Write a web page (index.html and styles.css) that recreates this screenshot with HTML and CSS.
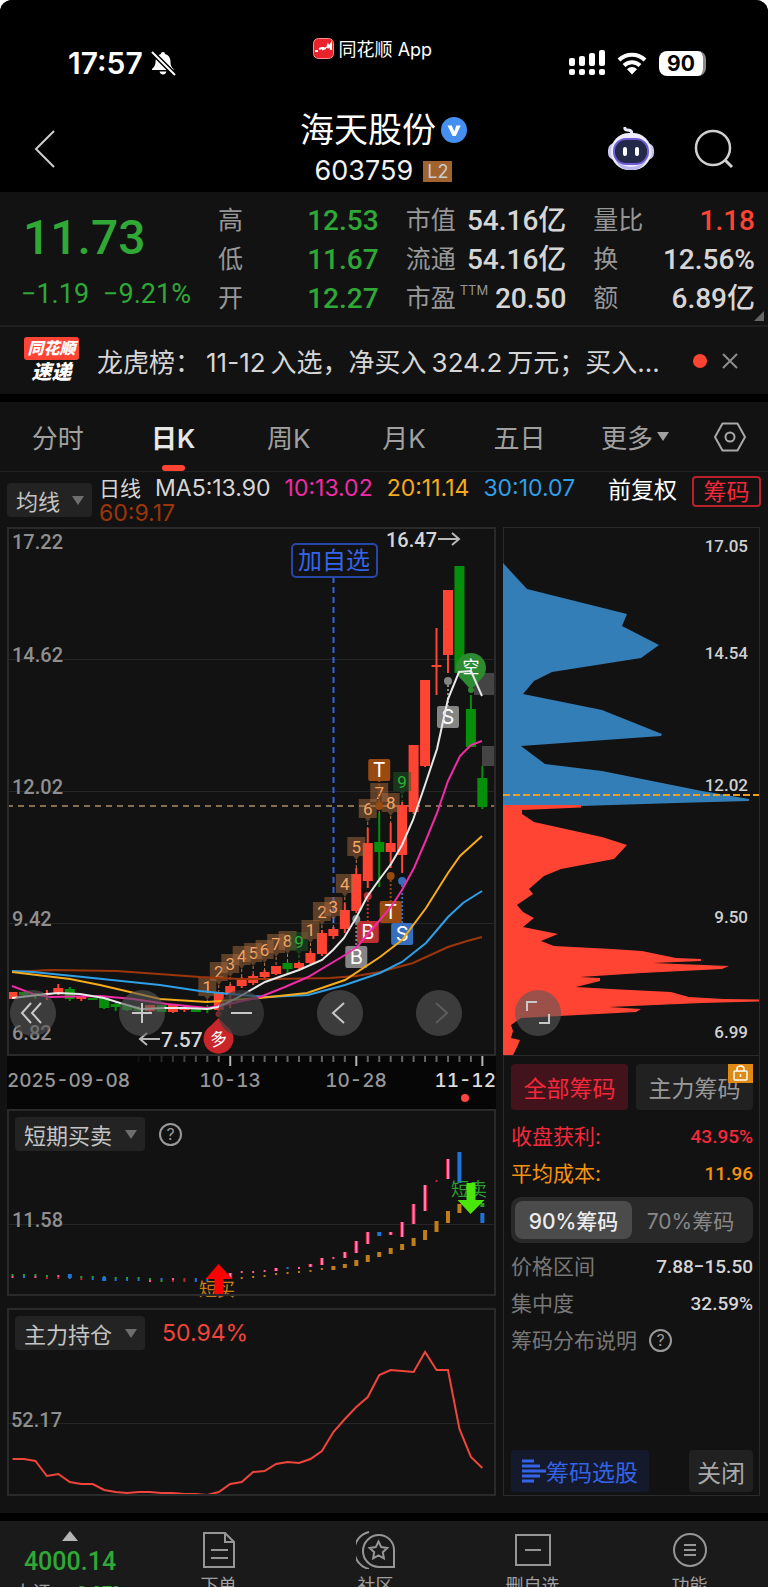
FILE: index.html
```html
<!DOCTYPE html>
<html lang="zh-CN">

<head>
    <meta charset="UTF-8">
    <meta name="viewport" content="width=device-width, initial-scale=1.0">
    <title>海天股份 603759</title>
    <link rel="stylesheet" href="styles.css">
</head>

<body>
    <div class="app">
        <header class="top">
            <div class="status">
                <div class="clock">
                    <span>17:57</span>
                    <svg width="26" height="26" viewBox="0 0 26 26">
                        <path d="M13 2c1.300 0 2 .8 2 2 3.600 1 5.500 3.800 5.500 7.500 0 4 .8 5.500 3 7.500v1H2v-1c2.200-2 3.500-3.500 3.500-7.500C5.500 7.800 7.400 5 11 4c0-1.200.7-2 2-2zM9.500 21.500h7c-.5 2-1.800 3-3.500 3s-3-1-3.500-3z" fill="#fff" />
                        <path d="M2 2l22 22" stroke="#000" stroke-width="5" />
                        <path d="M2 2l23 23" stroke="#fff" stroke-width="2" />
                    </svg>
                </div>
                <div class="from-app">
                    <svg width="21" height="21" viewBox="0 0 21 21">
                        <rect x=".5" y=".5" width="20" height="20" rx="5" fill="#e8232b" stroke="#ff8d8d" />
                        <path d="M2 13h3M6 11l3-1M10 9v2l3-1M14 10l1-3 1 2 2-3v6" fill="none" stroke="#fff" stroke-width="2" />
                    </svg>
                    <span>同花顺 App</span>
                </div>
                <div class="signals">
                    <svg width="36" height="26" viewBox="0 0 36 26" fill="#fff">
                        <rect x="0" y="8" width="6" height="8" rx="2" />
                        <rect x="10" y="6" width="6" height="10" rx="2" />
                        <rect x="20" y="3" width="6" height="13" rx="2" />
                        <rect x="30" y="0" width="6" height="16" rx="2" />
                        <rect x="0" y="19" width="6" height="6" rx="2" />
                        <rect x="10" y="19" width="6" height="6" rx="2" />
                        <rect x="20" y="19" width="6" height="6" rx="2" />
                        <rect x="30" y="19" width="6" height="6" rx="2" />
                    </svg>
                    <svg width="30" height="24" viewBox="0 0 30 24">
                        <g fill="none" stroke="#fff" stroke-width="4">
                            <path d="M2 9a18.500 18.500 0 0 1 26 0" />
                            <path d="M7 14.500a11.500 11.500 0 0 1 16 0" />
                        </g>
                        <path d="M15 23.500l-5-5.300a7 7 0 0 1 10 0z" fill="#fff" />
                    </svg>
                    <span class="battery">90</span>
                </div>
            </div>
            <div class="title-bar">
                <button class="icon-btn back" aria-label="返回">
                    <svg width="24" height="40" viewBox="0 0 24 40" fill="none" stroke="#d0d0d0" stroke-width="2">
                        <path d="M21 2L3 20l18 18" />
                    </svg>
                </button>
                <div class="title">
                    <h1>海天股份
                        <svg width="26" height="26" viewBox="0 0 26 26">
                            <circle cx="13" cy="13" r="13" fill="#448ff0" />
                            <path d="M6.500 8.500h4.300l2.400 6 2.200-6h4.300l-4.900 10.500h-3.200z" fill="#fff" />
                        </svg>
                    </h1>
                    <p><span>603759</span><span class="level">L2</span></p>
                </div>
                <div class="title-actions">
                    <button class="icon-btn" aria-label="助手">
                        <svg width="46" height="44" viewBox="0 0 46 44">
                            <path d="M23 8c2-4-1-5-4-5-2 0-3-2-1-3" fill="none" stroke="#e9e9fb" stroke-width="3" />
                            <rect x="0" y="16" width="46" height="17" rx="7" fill="#c9c8f2" />
                            <rect x="3" y="6" width="40" height="37" rx="18" fill="#ececfb" />
                            <path d="M8 33c6 9 24 9 30 0-3 8-9 10-15 10S11 41 8 33z" fill="#b9b6ee" />
                            <rect x="6" y="12" width="34" height="25" rx="12" fill="#232949" stroke="#6f5bd8" stroke-width="2" />
                            <rect x="15" y="20" width="4" height="9" rx="2" fill="#fff" />
                            <rect x="27" y="20" width="4" height="9" rx="2" fill="#fff" />
                        </svg>
                    </button>
                    <button class="icon-btn" aria-label="搜索">
                        <svg width="40" height="40" viewBox="0 0 40 40" fill="none" stroke="#d0d0d0" stroke-width="2.500">
                            <circle cx="19" cy="19" r="17" />
                            <path d="M31 31l7 7" stroke-width="3" />
                        </svg>
                    </button>
                </div>
            </div>
        </header>

        <section class="quote">
            <div class="last">
                <strong>11.73</strong>
                <div class="change"><span>−1.19</span><span>−9.21%</span></div>
            </div>
            <div class="stats">
                <div><span>高</span><b class="down">12.53</b></div>
                <div><span>低</span><b class="down">11.67</b></div>
                <div><span>开</span><b class="down">12.27</b></div>
            </div>
            <div class="stats">
                <div><span>市值</span><b>54.16亿</b></div>
                <div><span>流通</span><b>54.16亿</b></div>
                <div><span>市盈<sup>TTM</sup></span><b>20.50</b></div>
            </div>
            <div class="stats">
                <div><span>量比</span><b class="up">1.18</b></div>
                <div><span>换</span><b>12.56%</b></div>
                <div><span>额</span><b>6.89亿</b></div>
            </div>
            <i class="corner"></i>
        </section>

        <section class="news">
            <div class="news-logo"><span>同花顺</span><em>速递</em></div>
            <a href="#" class="news-text">龙虎榜：<span>11-12</span>入选，净买入<span>324.2</span>万元；买入...</a>
            <i class="dot"></i>
            <button class="icon-btn" aria-label="关闭">
                <svg width="16" height="16" viewBox="0 0 16 16" stroke="#8c8c8c" stroke-width="2">
                    <path d="M1 1l14 14M15 1L1 15" />
                </svg>
            </button>
        </section>

        <nav class="tabs">
            <button>分时</button>
            <button class="active">日K</button>
            <button>周K</button>
            <button>月K</button>
            <button>五日</button>
            <button>更多<i class="caret small"></i></button>
            <button class="setting" aria-label="设置">
                <svg width="34" height="30" viewBox="0 0 34 30" fill="none" stroke="#a8a8a8" stroke-width="2">
                    <path d="M9.500 1.500h15L32 15l-7.500 13.500h-15L2 15z" stroke-linejoin="round" />
                    <circle cx="17" cy="15" r="4.500" />
                </svg>
            </button>
        </nav>

        <div class="ma-row">
            <button class="picker">均线<i class="caret"></i></button>
            <div class="ma-list">
                <span class="period">日线</span>
                <span>MA5:13.90</span>
                <span class="ma10">10:13.02</span>
                <span class="ma20">20:11.14</span>
                <span class="ma30">30:10.07</span>
                <span class="ma60">60:9.17</span>
            </div>
            <button class="adjust">前复权</button>
            <button class="chip-btn">筹码</button>
        </div>

        <main class="board">
            <div class="left">
                <div class="kline">
                    <svg id="kline" viewBox="7 527 489 529">
                        <path d="M7 659.500h489M7 791.500h489M7 923.500h489" stroke="#262626" />
                        <g class="axis">
                            <text x="12" y="549">17.22</text>
                            <text x="12" y="662">14.62</text>
                            <text x="12" y="794">12.02</text>
                            <text x="12" y="926">9.42</text>
                            <text x="12" y="1040">6.82</text>
                        </g>
                        <path d="M474 673h22v22h-22zM482 746h14v20h-14z" fill="#444" />
                        <path d="M333.500 577V931" stroke="#3563e0" stroke-width="2" stroke-dasharray="6 4" />
                        <path d="M7 806h489" stroke="#866f50" stroke-width="2" stroke-dasharray="6 5" />
                        <g id="candles"></g>
                        <g id="marks"></g>
                        <g id="averages"></g>
                        <g class="extreme">
                            <text x="386" y="547">16.47</text>
                            <text x="161" y="1047" class="big">7.57</text>
                            <path d="M438 539h20M452 533l7 6-7 6M160 1039h-19M147 1033l-7 6 7 6" />
                        </g>
                    </svg>
                    <button class="add-btn">加自选</button>
                </div>
                <div class="dates">
                    <svg id="ticks" viewBox="7 1056 489 12"></svg>
                    <div class="date-labels">
                        <span>2025-09-08</span>
                        <span>10-13</span>
                        <span>10-28</span>
                        <span class="today">11-12</span>
                    </div>
                </div>
                <div class="panel">
                    <div class="panel-head">
                        <button class="picker">短期买卖<i class="caret"></i></button>
                        <button class="help" aria-label="说明">?</button>
                    </div>
                    <svg viewBox="7 1109 489 187">
                        <path d="M7 1224.500h489" stroke="#262626" />
                        <g class="axis"><text x="12" y="1227">11.58</text></g>
                        <g id="trend"></g>
                        <text x="199" y="1296" class="buy">短买</text>
                        <text x="451" y="1196" class="sell">短卖</text>
                        <path d="M218.500 1264l14 15h-9v16h-9v-16h-9z" fill="#f00" />
                        <path d="M470.500 1214l14-14h-9v-17h-9v17h-9z" fill="#4be60c" />
                    </svg>
                </div>
                <div class="panel">
                    <div class="panel-head">
                        <button class="picker">主力持仓<i class="caret"></i></button>
                        <span class="ratio">50.94%</span>
                    </div>
                    <svg viewBox="7 1308 489 188">
                        <path d="M7 1423.500h489" stroke="#262626" />
                        <g class="axis"><text x="11" y="1427">52.17</text></g>
                        <g id="holding"></g>
                    </svg>
                </div>
            </div>

            <aside class="right">
                <svg class="chips" viewBox="505 528 255 527">
                    <path fill="#347eb8" d="M504 563L528 589 628 614 623 626 660 645 642 658 553 672 535 681 524 694 603 710 663 734 662 736 522 746 546 764 603 771 703 791 750 799 750 801 677 803 582 806H504z" />
                    <path fill="#ff4433" d="M504 805H582V807.500L523 810V814L535 822 603 837 628 845 615 859 562 869 545 876 530 889 534 894 518 905 524 912 535 918 524 927 559 934 542 941 555 946 613 949 643 951 677 958 702 959V961L654 963 730 966 723 969 643 973 581 977 601 978V981L577 987 612 989 672 992 690 997 725 999 760 999.500V1001.500L703 1003 610 1007 642 1009 637 1012 522 1018 512 1025 514 1031 512 1038 521 1040 518 1047 514 1055H504z" />
                    <path d="M504 795h256" stroke="#ef9f1d" stroke-width="2" stroke-dasharray="7 3" />
                    <g class="chip-axis">
                        <text x="749" y="552">17.05</text>
                        <text x="749" y="659">14.54</text>
                        <text x="749" y="791">12.02</text>
                        <text x="749" y="923">9.50</text>
                        <text x="749" y="1038">6.99</text>
                    </g>
                </svg>
                <div class="chip-info">
                    <div class="chip-tabs">
                        <button class="active">全部筹码</button>
                        <button>主力筹码
                            <svg class="lock" width="25" height="19" viewBox="0 0 25 19">
                                <rect width="25" height="19" fill="#e08a14" />
                                <g fill="none" stroke="#fff" stroke-width="1.500">
                                    <rect x="6" y="7" width="13" height="9" rx="1" />
                                    <path d="M9 7V5a3.500 3 0 0 1 7 0v2M12.500 10v3" />
                                </g>
                            </svg>
                        </button>
                    </div>
                    <div class="info-row profit"><span>收盘获利:</span><b>43.95%</b></div>
                    <div class="info-row cost"><span>平均成本:</span><b>11.96</b></div>
                    <div class="segment">
                        <button class="active">90%筹码</button>
                        <button>70%筹码</button>
                    </div>
                    <div class="info-row"><span>价格区间</span><b>7.88−15.50</b></div>
                    <div class="info-row"><span>集中度</span><b>32.59%</b></div>
                    <div class="info-row explain"><span>筹码分布说明</span><button class="help" aria-label="说明">?</button></div>
                    <div class="chip-foot">
                        <button class="pick">
                            <svg width="24" height="24" viewBox="0 0 24 24" stroke="#3563e8" stroke-width="3">
                                <path d="M0 2h12M0 7h18M0 12h24M0 17h18M0 22h12" />
                            </svg>筹码选股
                        </button>
                        <button class="close">关闭</button>
                    </div>
                </div>
            </aside>

            <div class="controls">
                <button class="first" aria-label="最左"><svg viewBox="0 0 46 46"><path d="M21 13L12 23l9 10M31 13l-9 10 9 10" /></svg></button>
                <button aria-label="放大"><svg viewBox="0 0 46 46"><path d="M23 13v20M13 23h20" /></svg></button>
                <button class="dim" aria-label="缩小"><svg viewBox="0 0 46 46"><path d="M13 23h21" /></svg></button>
                <button aria-label="左移"><svg viewBox="0 0 46 46"><path d="M27 13l-11 10 11 10" /></svg></button>
                <button class="off" aria-label="右移" disabled><svg viewBox="0 0 46 46"><path d="M20 13l11 10-11 10" /></svg></button>
                <button aria-label="全屏"><svg viewBox="0 0 46 46"><path d="M12 21v-9h10M34 24v9H24" /></svg></button>
            </div>
        </main>

        <footer class="bottom">
            <a href="#" class="index">
                <i class="caret up"></i>
                <strong>4000.14</strong>
                <span><small>上证</small><b>-0.97%</b></span>
            </a>
            <a href="#">
                <svg width="34" height="38" viewBox="0 0 34 38"><path d="M2 2h21l9 9v25H2zM23 2v9h9M9 19h17M9 27h17" /></svg>
                <span>下单</span>
            </a>
            <a href="#">
                <svg width="40" height="38" viewBox="0 0 40 38"><path d="M23 4a15 15 0 0 0 0 32h15V19A15 15 0 0 0 23 4zM13 1a19 19 0 0 0 0 37M22.500 10.500l2.700 5.600 6.100.8-4.500 4.300 1.100 6.100-5.400-2.900-5.400 2.900 1.100-6.100-4.500-4.300 6.100-.8z" /></svg>
                <span>社区</span>
            </a>
            <a href="#">
                <svg width="38" height="38" viewBox="0 0 38 38"><path d="M2 4h34v30H2zM11 19h16" /></svg>
                <span>删自选</span>
            </a>
            <a href="#">
                <svg width="38" height="38" viewBox="0 0 38 38"><circle cx="19" cy="19" r="16" /><path d="M13 14h12M13 19h12M13 24h12" /></svg>
                <span>功能</span>
            </a>
        </footer>
    </div>
    <script src="chart.js"></script>
</body>

</html>
```

FILE: styles.css
```css
* {
    box-sizing: border-box;
}

body {
    margin: 0;
    background: #fff;
    color: #d6d6d6;
    font-family: Inter, "Noto Sans CJK SC", sans-serif;
}

button {
    border: 0;
    padding: 0;
    background: none;
    color: inherit;
    font: inherit;
    white-space: nowrap;
}

a {
    color: inherit;
    text-decoration: none;
}

svg {
    display: block;
    flex: none;
}

.app {
    height: 100vh;
    overflow: hidden;
    background: #121212;
    border-radius: 12px 12px 0 0;
}

/* status bar and title */
.top {
    background: #000;
    height: 192px;
}

.status {
    display: flex;
    justify-content: space-between;
    padding: 36px 58px 0 68px;
    height: 96px;
    color: #fff;
}

.clock,
.signals,
.from-app {
    display: flex;
    align-items: center;
}

.clock {
    height: 54px;
    gap: 7px;
    font-size: 30px;
    font-weight: 600;
}

.from-app {
    height: 24px;
    gap: 5px;
    font-size: 18px;
}

.signals {
    height: 54px;
    gap: 12px;
}

.battery {
    width: 47px;
    height: 25px;
    border-radius: 8px;
    border-right: 3px solid #8a8a8a;
    background: #fff;
    color: #000;
    font-size: 21px;
    font-weight: 700;
    line-height: 25px;
    text-align: center;
    margin-right: 4px;
}

.title-bar {
    display: grid;
    grid-template-columns: 1fr auto 1fr;
    padding: 14px 34px 0 33px;
}

.icon-btn {
    display: flex;
    align-items: center;
}

.back {
    height: 78px;
}

.title {
    text-align: center;
}

.title h1 {
    display: flex;
    align-items: center;
    gap: 5px;
    margin: 0;
    color: #fff;
    font-size: 34px;
    font-weight: 400;
    line-height: 40px;
}

.title p {
    display: flex;
    justify-content: center;
    align-items: center;
    gap: 10px;
    margin: 0;
    color: #f2f2f2;
    font-size: 27px;
    line-height: 42px;
}

.level {
    padding: 0 4px;
    background: #a0622f;
    color: #ccc;
    font-size: 18px;
    line-height: 21px;
}

.title-actions {
    display: flex;
    justify-content: flex-end;
    align-items: center;
    gap: 40px;
    height: 78px;
}

/* quote */
.quote {
    position: relative;
    display: grid;
    grid-template-columns: 166fr 162fr 162fr 163fr;
    column-gap: 27px;
    padding: 9px 13px 0 21px;
    height: 135px;
    border-bottom: 2px solid #1f1f1f;
}

.last {
    color: #2fa836;
    font-family: Roboto, sans-serif;
    white-space: nowrap;
}

.last strong {
    display: block;
    padding-left: 2px;
    font-size: 48px;
    font-weight: 500;
    line-height: 74px;
}

.change {
    display: flex;
    gap: 14px;
    font-size: 27px;
    line-height: 39px;
}

.stats div {
    display: flex;
    justify-content: space-between;
    line-height: 39px;
    white-space: nowrap;
}

.stats span {
    color: #979797;
    font-size: 25px;
}

.stats sup {
    display: inline-block;
    margin-left: 4px;
    font-size: 13px;
    line-height: 13px;
    vertical-align: 12px;
}

.stats b {
    font-family: Roboto, "Noto Sans CJK SC", sans-serif;
    font-size: 28px;
    font-weight: 500;
}

.down {
    color: #2fa836;
}

.up {
    color: #ff4433;
}

.corner {
    position: absolute;
    right: 4px;
    bottom: 4px;
    border-left: 10px solid transparent;
    border-bottom: 10px solid #666;
}

/* news */
.news {
    display: flex;
    align-items: center;
    height: 75px;
    padding: 0 30px 0 24px;
    border-bottom: 8px solid #000;
}

.news-logo {
    width: 55px;
    color: #fff;
    font-style: italic;
    font-weight: 900;
    text-align: center;
}

.news-logo span {
    display: block;
    border-radius: 3px;
    background: #ff4433;
    font-size: 16px;
    line-height: 23px;
}

.news-logo em {
    display: block;
    font-size: 20px;
    line-height: 24px;
}

.news-text {
    flex: 1;
    min-width: 0;
    overflow: hidden;
    padding-left: 18px;
    font-size: 26px;
    white-space: nowrap;
}

.news-text span {
    padding: 0 5px;
}

.dot {
    width: 14px;
    height: 14px;
    margin: 0 15px 0 18px;
    border-radius: 50%;
    background: #ff4433;
}

/* tabs */
.tabs {
    display: flex;
    height: 70px;
    border-bottom: 1px solid #222;
}

.tabs button {
    position: relative;
    display: flex;
    align-items: center;
    justify-content: center;
    flex: 115;
    color: #a0a0a0;
    font-size: 26px;
}

.tabs .setting {
    flex: 75;
}

.tabs .active {
    color: #e6e6e6;
    font-weight: 600;
}

.tabs .active::after {
    content: "";
    position: absolute;
    bottom: 0;
    width: 23px;
    height: 6px;
    border-radius: 3px;
    background: #ff4433;
}

.caret {
    border: 6px solid transparent;
    border-top: 9px solid #6e6e6e;
    border-bottom: 0;
}

.caret.small {
    margin-left: 4px;
    border-top-color: #a0a0a0;
}

.caret.up {
    margin-bottom: 4px;
    border-width: 0 8px 10px;
    border-bottom: 10px solid #b5b5b5;
}

.picker {
    display: flex;
    align-items: center;
    justify-content: space-between;
    height: 34px;
    padding: 0 8px 0 9px;
    border-radius: 4px;
    background: #232323;
    color: #c4c4c4;
    font-size: 22px;
}

/* moving averages */
.ma-row {
    display: flex;
    align-items: flex-start;
    height: 55px;
    padding: 4px 7px 0;
}

.ma-row .picker {
    width: 85px;
    margin-top: 7px;
}

.ma-list {
    display: flex;
    flex: 1;
    flex-wrap: wrap;
    column-gap: 14px;
    padding-left: 7px;
    font-size: 23px;
    line-height: 25px;
    white-space: nowrap;
}

.period {
    font-size: 21px;
}

.ma10 { color: #f02ba5; }
.ma20 { color: #f5ab1b; }
.ma30 { color: #2f9fe8; }
.ma60 { color: #9c3608; }

.adjust {
    height: 28px;
    color: #fff;
    font-size: 23px;
    line-height: 28px;
}

.chip-btn {
    width: 69px;
    height: 31px;
    margin-left: 15px;
    border: 2px solid #b9202c;
    border-radius: 4px;
    color: #f5283c;
    font-size: 23px;
    line-height: 26px;
}

/* charts */
.board {
    position: relative;
    display: grid;
    grid-template-columns: 489fr 257fr;
    column-gap: 7px;
    padding: 0 8px 17px 7px;
    border-bottom: 8px solid #000;
}

.board svg {
    overflow: visible;
}

.kline,
.panel {
    position: relative;
}

.kline > svg,
.panel > svg,
.dates > svg,
.chips {
    width: 100%;
    height: auto;
}

.kline > svg,
.panel > svg {
    outline: 2px solid #2a2a2a;
    outline-offset: -2px;
}

.axis {
    fill: #8f8f8f;
    font: 500 20px Roboto, sans-serif;
}

.chip-axis {
    fill: #d0d0d0;
    font: 500 17px Roboto, sans-serif;
    text-anchor: end;
}

.extreme {
    fill: #d6d6d6;
    font: 500 20px Roboto, sans-serif;
}

.extreme .big {
    font-size: 21px;
}

.extreme path {
    fill: none;
    stroke: #b8b8b8;
    stroke-width: 2;
}

.mark-text {
    font: 17px Roboto, "Noto Sans CJK SC", sans-serif;
    text-anchor: middle;
}

.mark-letter {
    font-family: Inter, "Noto Sans CJK SC", sans-serif;
    font-size: 20px;
    fill: #fff;
}

.mark-word {
    font-size: 17px;
    fill: #fff;
}

.buy,
.sell {
    fill: #c97f16;
    font: 18px "Noto Sans CJK SC", sans-serif;
}

.sell {
    fill: #2c9b31;
}

.add-btn {
    position: absolute;
    top: 16px;
    left: 58%;
    width: 87px;
    height: 35px;
    border: 2px solid #2747a8;
    border-radius: 5px;
    background: #121212;
    color: #3565ea;
    font-size: 24px;
    line-height: 30px;
}

.dates {
    height: 53px;
    background: #060606;
}

.date-labels {
    display: flex;
    color: #979797;
    font-size: 19px;
    font-weight: 500;
    font-variant-numeric: tabular-nums;
    line-height: 26px;
}

.date-labels span {
    width: 126px;
    text-align: center;
}

.date-labels span:first-child {
    flex: 1;
    text-align: left;
}

.date-labels .today {
    width: 77px;
    color: #dcdcdc;
    text-align: right;
}

.today::after {
    content: "";
    display: block;
    width: 8px;
    height: 8px;
    margin: 0 27px 0 auto;
    border-radius: 50%;
    background: #ff4444;
}

.panel + .panel {
    margin-top: 12px;
}

.panel-head {
    position: absolute;
    top: 8px;
    left: 8px;
    display: flex;
    align-items: center;
    gap: 14px;
}

.panel-head .picker {
    width: 130px;
}

.help {
    width: 23px;
    height: 23px;
    border: 2px solid #999;
    border-radius: 50%;
    color: #999;
    font-size: 16px;
    line-height: 19px;
    text-align: center;
}

.ratio {
    padding-left: 3px;
    color: #f0453a;
    font-size: 23px;
}

/* chip distribution */
.right {
    display: flex;
    flex-direction: column;
    border: 1px solid #2a2a2a;
}

.chip-info {
    flex: 1;
    display: flex;
    flex-direction: column;
    padding: 8px 6px 3px 7px;
    border-top: 1px solid #2a2a2a;
}

.chip-tabs {
    display: grid;
    grid-template-columns: 1fr 1fr;
    column-gap: 8px;
    margin-bottom: 8px;
}

.chip-tabs button {
    position: relative;
    height: 46px;
    border-radius: 4px;
    background: #212121;
    color: #999;
    font-size: 23px;
}

.chip-tabs .active {
    background: #42131a;
    color: #f5283c;
}

.lock {
    position: absolute;
    top: 0;
    right: 0;
}

.info-row {
    display: flex;
    align-items: center;
    justify-content: space-between;
    color: #777;
    font-size: 21px;
    line-height: 37px;
}

.info-row b {
    color: #d6d6d6;
    font-family: Roboto, sans-serif;
    font-size: 19px;
    font-weight: 500;
}

.profit,
.profit b {
    color: #f5283c;
}

.cost,
.cost b {
    color: #f5930f;
}

.explain {
    justify-content: flex-start;
    gap: 12px;
}

.segment {
    display: grid;
    grid-template-columns: 1fr 1fr;
    margin: 5px 0;
    padding: 4px;
    border-radius: 10px;
    background: #292929;
    color: #888;
}

.segment button {
    height: 38px;
    border-radius: 8px;
    font-size: 21px;
}

.segment .active {
    background: #4b4b4b;
    color: #ededed;
    font-weight: 500;
}

.chip-foot {
    display: flex;
    justify-content: space-between;
    margin-top: auto;
}

.chip-foot button {
    display: flex;
    align-items: center;
    height: 42px;
    padding: 0 11px;
    border-radius: 4px;
    background: #141a2c;
    color: #3563e8;
    font-size: 23px;
}

.chip-foot .close {
    padding: 0 8px;
    background: #212121;
    color: #a8a8a8;
    font-size: 24px;
}

/* round buttons over both charts */
.controls {
    position: absolute;
    top: 463px;
    left: 10px;
    right: 207px;
    display: flex;
    justify-content: space-between;
}

.controls button {
    width: 46px;
    height: 46px;
    border-radius: 50%;
    background: rgba(88, 88, 88, .6);
}

.controls .first {
    margin-right: 10px;
}

.controls path {
    fill: none;
    stroke: #c8c8c8;
    stroke-width: 2;
}

.controls .dim {
    background: rgba(60, 60, 60, .7);
}

.controls .off path {
    stroke: #5c5c5c;
}

/* bottom bar */
.bottom {
    display: flex;
    height: 100px;
    background: #1a1a1a;
}

.bottom a {
    flex: 157;
    display: flex;
    flex-direction: column;
    align-items: center;
    padding-top: 10px;
    color: #a0a0a0;
    font-size: 18px;
    line-height: 34px;
}

.bottom svg {
    fill: none;
    stroke: #969696;
    stroke-width: 2;
}

.bottom .index {
    flex: 140;
}

.index strong {
    color: #2fa836;
    font: 500 25px/34px Roboto, sans-serif;
}

.index span {
    display: flex;
    gap: 20px;
    line-height: 28px;
}

.index small {
    font-size: 18px;
}

.index b {
    color: #2fa836;
    font: 500 18px/28px Roboto, sans-serif;
}
```

FILE: chart.js
```js
const RED = '#ff4433';
const GREEN = '#078f0b';
const STEP = 11.46;

const xAt = i => 12.5 + STEP * i;
const byId = id => document.getElementById(id);

function rect(x, y, w, h, fill) {
    return `<rect x="${x}" y="${y}" width="${w}" height="${h}" fill="${fill}"/>`;
}

// body top, body bottom, high, low, falling day
const candles = [
    [992, 999, 992, 999], [992, 995, 992, 997, 1], [993, 996, 993, 999, 1], [993, 995, 990, 1000],
    [988, 993, 984, 995], [989, 999, 987, 1001, 1], [997, 999, 996, 1001], [998, 1000, 998, 1000, 1],
    [998, 1008, 998, 1009, 1], [1004, 1007, 1003, 1011, 1], [1005, 1010, 1005, 1011, 1], [1008, 1011, 1006, 1012, 1],
    [1005, 1011, 1005, 1012], [1005, 1012, 1005, 1012, 1], [1005, 1012, 1005, 1013], [1008, 1010, 1006, 1012],
    [1008, 1012, 1008, 1012, 1], [1008, 1010, 1006, 1013, 1], [992, 1010, 992, 1011], [986, 995, 984, 1008],
    [979, 986, 977, 988], [976, 983, 974, 985], [972, 977, 970, 979], [966, 974, 966, 975],
    [963, 969, 962, 973, 1], [963, 968, 962, 969], [953, 963, 951, 964], [933, 954, 930, 956],
    [929, 936, 927, 939], [910, 929, 903, 933], [874, 911, 868, 913], [843, 881, 828, 888],
    [842, 852, 813, 887, 1], [843, 852, 823, 868], [805, 855, 802, 873], [745, 812, 745, 814],
    [680, 766, 680, 767], [665, 667, 628, 695], [590, 655, 590, 673], [566, 673, 566, 673, 1],
    [709, 747, 695, 747, 1], [778, 807, 766, 809, 1]
];

byId('candles').innerHTML = candles.map(([top, bottom, high, low, falling], i) => {
    const color = falling ? GREEN : RED;
    return rect(xAt(i) - 5, top, 10, bottom - top, color) + rect(xAt(i) - 1, high, 2, low - high, color);
}).join('');

const averages = {
    '#9c3608': '12,972 50,970 117,971 200,977 240,979 273,979 330,978 356,976 380,972 413,963 448,947 467,941 482,937',
    '#2f9fe8': '12,971 33,972 83,977 160,985 200,991 230,994 267,997 308,995 345,985 380,973 402,962 426,943 448,917 463,903 482,891',
    '#f5ab1b': '12,972 70,979 100,985 160,999 207,1002 260,998 307,993 345,980 380,957 402,940 426,908 448,873 460,856 482,836',
    '#f02ba5': '12,986 33,994 50,997 100,996 133,999 167,1004 207,1008 220,1006 260,997 285,987 308,977 345,955 357,947 368,934 391,907 402,890 414,868 426,840 437,813 448,781 460,756 471,745 482,741',
    '#e8e8e8': '12,998 47,994 58,993 80,994 104,998 120,1003 141,1009 165,1008 185,1008 207,1009 218,1007 235,999 265,982 299,970 322,960 333,950 344,938 356,918 367,897 379,880 391,864 402,845 413,820 425,785 437,749 448,699 459,672 471,671 482,696'
};

byId('averages').innerHTML = Object.entries(averages).map(([color, points]) =>
    `<polyline points="${points}" fill="none" stroke="${color}" stroke-width="2"/>`).join('');

// nine-turn counters: candle index, label, centre y
const counters = [
    [17, 1, 987], [18, 2, 972], [19, 3, 964], [20, 4, 956], [21, 5, 953], [22, 6, 950],
    [23, 7, 944], [24, 8, 941], [25, 9, 942], [26, 1, 930], [27, 2, 912], [28, 3, 907],
    [29, 4, 884], [30, 5, 847], [31, 6, 809], [32, 7, 793], [33, 8, 803], [34, 9, 782]
];

// trade markers: candle index, letter, centre y, dot y, color
const trades = [
    [32, 'T', 770, 806, '#984a10'], [33, 'T', 912, 876, '#984a10'], [34, 'S', 934, 881, '#356fbd'],
    [31, 'B', 932, 896, '#bd3032'], [30, 'B', 957, 919, '#858585'], [38, 'S', 717, 681, '#858585']
];

let marks = counters.map(([i, label, y]) => {
    const x = xAt(i);
    const nine = label === 9;
    return `<path d="M${x - 9} ${y - 10}h18v19h-6l-3 4-3-4h-6z" fill="${nine ? '#1b5a25' : '#a86a3c'}" fill-opacity=".5"/>
        <path d="M${x} ${y + 13}V${candles[i][2]}" stroke="${nine ? '#1f7a2c' : '#b87a45'}" stroke-dasharray="3 2"/>
        <text class="mark-text" x="${x}" y="${y + 6}" fill="${nine ? '#2bb035' : '#f5a566'}">${label}</text>`;
}).join('');

marks += trades.map(([i, letter, y, dot, color]) => {
    const x = xAt(i);
    return `<path d="M${x} ${dot}V${y}" stroke="${color}" stroke-width="2" stroke-dasharray="2 2"/>
        <circle cx="${x}" cy="${dot}" r="4" fill="${color}"/>
        <rect x="${x - 11}" y="${y - 11}" width="22" height="22" rx="2" fill="${color}"/>
        <text class="mark-text mark-letter" x="${x}" y="${y + 7}">${letter}</text>`;
}).join('');

marks += `<path d="M471 690l-9-10a15 15 0 1 1 18 0z" fill="#2c8a30"/>
    <circle cx="471" cy="690" r="3" fill="#2c8a30"/>
    <text class="mark-text mark-word" x="471" y="673">空</text>
    <circle cx="218.500" cy="1014" r="3" fill="#8f2327"/>
    <path d="M218.500 1018l8 8a15 15 0 1 1-16 0z" fill="#c9262c"/>
    <text class="mark-text mark-word" x="218.500" y="1045" transform="rotate(-12 218 1039)">多</text>`;
byId('marks').innerHTML = marks;

// time ticks fade in from the left
let ticks = '';
for (let i = 11; i <= 41; i++) {
    const long = i === 19 || i === 30 || i === 41;
    ticks += `<path d="M${xAt(i)} 1056v${long ? 10 : 6}" stroke="${long ? '#b5b5b5' : '#666'}" stroke-width="2" opacity="${Math.min(1, (i - 10) / 8)}"/>`;
}
byId('ticks').innerHTML = ticks;

const PINK = '#ff5a94';
const BLUE = '#1f74dc';
const ORANGE = '#c07d19';

// short-term signal: candle index, top, bottom, color
const signal = [
    [19, 1273, 1279, PINK], [20, 1271, 1273, PINK], [21, 1271, 1273, PINK], [22, 1270, 1272, PINK],
    [23, 1268, 1271, PINK], [24, 1267, 1269, BLUE], [25, 1267, 1269, PINK], [26, 1264, 1267, PINK],
    [27, 1258, 1265, PINK], [28, 1257, 1259, PINK], [29, 1252, 1258, PINK], [30, 1241, 1253, PINK],
    [31, 1232, 1244, PINK], [32, 1232, 1236, BLUE], [33, 1232, 1235, PINK], [34, 1222, 1237, PINK],
    [35, 1204, 1224, PINK], [36, 1185, 1211, PINK], [37, 1180, 1182, '#c0242c'], [38, 1159, 1179, PINK],
    [39, 1152, 1183, BLUE], [41, 1213, 1223, BLUE], [41, 1203, 1207, '#2c9b31']
];
const base = [
    [1277, 1279], [1276, 1278], [1275, 1277], [1273, 1275], [1272, 1274], [1271, 1273], [1270, 1272],
    [1268, 1270], [1266, 1270], [1264, 1268], [1260, 1266], [1255, 1262], [1252, 1257], [1248, 1254],
    [1244, 1250], [1238, 1246], [1230, 1240], [1221, 1232], [1211, 1223], [1204, 1213]
];
const quiet = [
    ['#2c9b31', PINK], ['#2c9b31', BLUE], ['#2c9b31', PINK], ['#2c9b31', '#c0242c'], [PINK, '#c0242c'], [BLUE, BLUE],
    ['#2c9b31', '#c0242c'], ['#2c9b31', BLUE], ['#2c9b31', BLUE], ['#2c9b31', BLUE], ['#2c9b31', BLUE], ['#2c9b31', BLUE],
    ['#2c9b31', PINK], [BLUE, '#2c9b31'], [PINK, '#c0242c'], ['#c0242c', '#c0242c'], [BLUE, BLUE], [BLUE, BLUE]
];

let trend = quiet.map(([upper, lower], i) => {
    const y = 1274 + Math.min(4, Math.floor(i / 3));
    return rect(xAt(i) - 1, y, 2, 2, upper) + rect(xAt(i) - 1, y + 2, 2, 2, lower);
}).join('');
trend += rect(xAt(5) - 2, 1274, 4, 4, BLUE) + rect(xAt(8) - 2, 1277, 4, 4, BLUE);
trend += base.map(([top, bottom], n) => {
    const w = bottom - top > 2 ? 4 : 2;
    return rect(xAt(n + 20) - w / 2, top, w, bottom - top, ORANGE);
}).join('');
trend += signal.map(([i, top, bottom, color]) => {
    if (color === PINK && bottom - top > 2) {
        return rect(xAt(i) - 2, top, 4, bottom - top, '#d01835') + rect(xAt(i) - 1, top, 2, bottom - top, '#ff82c0');
    }
    const w = bottom - top > 2 ? 4 : 2;
    return rect(xAt(i) - w / 2, top, w, bottom - top, color);
}).join('');
byId('trend').innerHTML = trend;

const holding = [
    1459, 1459, 1461, 1476, 1474, 1482, 1484, 1484, 1490, 1492, 1493, 1492, 1492, 1493, 1493, 1494, 1494, 1495,
    1492, 1484, 1482, 1472, 1471, 1464, 1462, 1463, 1459, 1451, 1432, 1419, 1407, 1397, 1375, 1370, 1371, 1372,
    1352, 1370, 1370, 1429, 1457, 1468
];
byId('holding').innerHTML = `<polyline points="${holding.map((y, i) => `${xAt(i)},${y}`).join(' ')}" fill="none" stroke="#f0453a" stroke-width="2"/>`;
```
